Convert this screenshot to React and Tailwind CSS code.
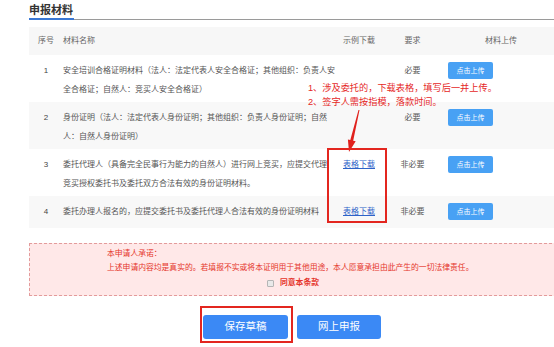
import React from 'react';

const rows = [
    {
        no: '1',
        lines: ['安全培训合格证明材料（法人：法定代表人安全合格证；其他组织：负责人安', '全合格证；自然人：竞买人安全合格证）'],
        sample: false,
        need: '必要',
        h: 'h-[47px]',
        bg: 'bg-white',
    },
    {
        no: '2',
        lines: ['身份证明（法人：法定代表人身份证明；其他组织：负责人身份证明；自然', '人：自然人身份证明）'],
        sample: false,
        need: '必要',
        h: 'h-[47px]',
        bg: 'bg-[#f8f8f8]',
    },
    {
        no: '3',
        lines: ['委托代理人（具备完全民事行为能力的自然人）进行网上竞买，应提交代理', '竞买授权委托书及委托双方合法有效的身份证明材料。'],
        sample: true,
        need: '非必要',
        h: 'h-[47px]',
        bg: 'bg-white',
    },
    {
        no: '4',
        lines: ['委托办理人报名的，应提交委托书及委托代理人合法有效的身份证明材料'],
        sample: true,
        need: '非必要',
        h: 'h-[32px]',
        bg: 'bg-[#f8f8f8]',
    },
];

const Arrow = () => (
    <svg className="absolute left-[340px] top-[105px]" width="25" height="50" viewBox="0 0 25 50">
        <polygon
            points="18.5,4.9 19.5,5.1 13.2,35.7 15.7,36.3 9,47 7.9,34.4 10.3,35"
            fill="#e0211d"
        />
    </svg>
);

const App = () => {
    return (
        <div className="relative w-[554px] h-[347px] overflow-hidden bg-white font-['Liberation_Sans','Noto_Sans_CJK_SC',sans-serif]">
            <div className="ml-[29px] w-[533px]">
                {/* Title */}
                <div className="flex pt-[2px] border-b border-[#9a9a9a]">
                    <span className="-mb-px border-b-2 border-[#3a78d4] text-[11px] leading-[16px] font-bold text-[#333] pr-[1px]">
                        申报材料
                    </span>
                </div>

                {/* Table */}
                <div className="mt-[7px] text-[8px] text-[#555]">
                    <div className="grid grid-cols-[34px_270px_52px_55px_1fr] h-[28px] items-center bg-[#f7f7f7] text-[#666]">
                        <div className="text-center">序号</div>
                        <div>材料名称</div>
                        <div className="text-center">示例下载</div>
                        <div className="text-center">要求</div>
                        <div className="text-center">材料上传</div>
                    </div>

                    {rows.map((r) => (
                        <div key={r.no} className={`grid grid-cols-[34px_270px_52px_55px_1fr] ${r.h} ${r.bg} pt-[6px] leading-[19px]`}>
                            <div className="text-center text-[#444]">{r.no}</div>
                            <div className="whitespace-nowrap">
                                {r.lines.map((l) => (
                                    <div key={l}>{l}</div>
                                ))}
                            </div>
                            <div className="text-center">
                                {r.sample && <span className="text-[#2d62c8] underline">表格下载</span>}
                            </div>
                            <div className="text-center">{r.need}</div>
                            <div className="pl-[8px]">
                                <button className="mt-[1px] w-[45px] h-[17px] rounded-[2px] bg-[#48a1f4] text-white text-[7px] leading-[17px] flex items-center justify-center">
                                    点击上传
                                </button>
                            </div>
                        </div>
                    ))}
                </div>

                {/* Promise */}
                <div className="mt-[15px] h-[53px] border border-dashed border-[#e39b9b] bg-[#ffe8e8] pt-[3px] text-[7.8px] leading-[14px] text-[#e5352b]">
                    <div className="pl-[77px]">本申请人承诺：</div>
                    <div className="pl-[77px]">上述申请内容均是真实的。若填报不实或将本证明用于其他用途，本人愿意承担由此产生的一切法律责任。</div>
                    <div className="pl-[237px] mt-[1px] flex items-center gap-[6px]">
                        <span className="w-[7px] h-[7px] rounded-[1px] border border-[#b5b5b5] bg-[#e9e9e9]" />
                        <span className="font-bold">同意本条款</span>
                    </div>
                </div>

                {/* Buttons */}
                <div className="mt-[10px] pl-[171px] flex items-start gap-[4px]">
                    <div className="border-2 border-[#e3261f] pt-[7px] pl-[1px] pr-[3px] pb-[2px]">
                        <button className="w-[85px] h-[24px] rounded-[3px] bg-[#3b89f5] text-white text-[10.5px] flex items-center justify-center">
                            保存草稿
                        </button>
                    </div>
                    <button className="mt-[9px] w-[84px] h-[24px] rounded-[3px] bg-[#3b89f5] text-white text-[10.5px] flex items-center justify-center">
                        网上申报
                    </button>
                </div>
            </div>

            {/* Annotations */}
            <div className="absolute left-[308px] top-[81px] text-[9.2px] leading-[14px] text-[#e5281f] whitespace-nowrap">
                <div>1、涉及委托的，下载表格，填写后一并上传。</div>
                <div>2、签字人需按指模，落款时间。</div>
            </div>
            <Arrow />
            <div className="absolute left-[327px] top-[148px] w-[60px] h-[75px] border-2 border-[#e3261f]" />
        </div>
    );
};

export default App;
